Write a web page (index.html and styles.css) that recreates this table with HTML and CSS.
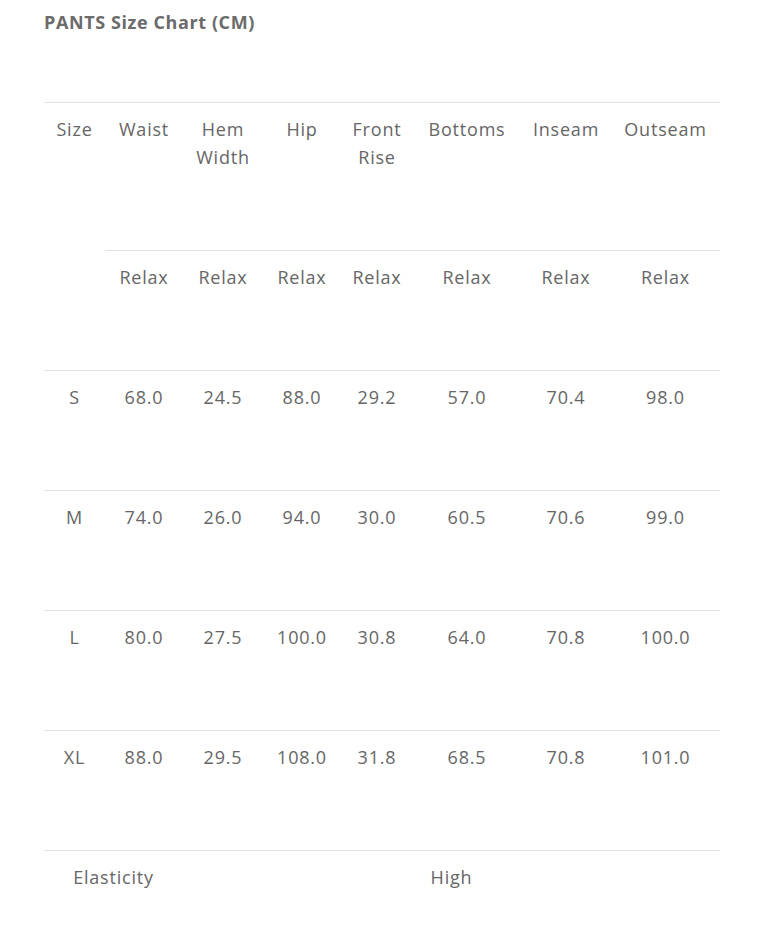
FILE: index.html
```html
<!DOCTYPE html>
<html lang="en">
<head>
    <meta charset="UTF-8">
    <meta name="viewport" content="width=device-width, initial-scale=1.0">
    <title>PANTS Size Chart</title>
    <link rel="stylesheet" href="styles.css">
</head>
<body>
    <div class="chart">
        <h2 class="chart-title">PANTS Size Chart (CM)</h2>
        <table class="size-table">
            <colgroup>
                <col style="width: 61px">
                <col style="width: 78px">
                <col style="width: 80px">
                <col style="width: 78px">
                <col style="width: 72px">
                <col style="width: 108px">
                <col style="width: 90px">
                <col style="width: 109px">
            </colgroup>
            <tr>
                <td rowspan="2">Size</td>
                <td>Waist</td>
                <td>Hem<br>Width</td>
                <td>Hip</td>
                <td>Front<br>Rise</td>
                <td>Bottoms</td>
                <td>Inseam</td>
                <td>Outseam</td>
            </tr>
            <tr>
                <td>Relax</td>
                <td>Relax</td>
                <td>Relax</td>
                <td>Relax</td>
                <td>Relax</td>
                <td>Relax</td>
                <td>Relax</td>
            </tr>
            <tr>
                <td>S</td>
                <td>68.0</td>
                <td>24.5</td>
                <td>88.0</td>
                <td>29.2</td>
                <td>57.0</td>
                <td>70.4</td>
                <td>98.0</td>
            </tr>
            <tr>
                <td>M</td>
                <td>74.0</td>
                <td>26.0</td>
                <td>94.0</td>
                <td>30.0</td>
                <td>60.5</td>
                <td>70.6</td>
                <td>99.0</td>
            </tr>
            <tr>
                <td>L</td>
                <td>80.0</td>
                <td>27.5</td>
                <td>100.0</td>
                <td>30.8</td>
                <td>64.0</td>
                <td>70.8</td>
                <td>100.0</td>
            </tr>
            <tr>
                <td>XL</td>
                <td>88.0</td>
                <td>29.5</td>
                <td>108.0</td>
                <td>31.8</td>
                <td>68.5</td>
                <td>70.8</td>
                <td>101.0</td>
            </tr>
            <tr>
                <td colspan="2">Elasticity</td>
                <td colspan="6">High</td>
            </tr>
        </table>
    </div>
</body>
</html>
```

FILE: styles.css
```css
body {
    margin: 0;
    font-family: "Open Sans", Arial, sans-serif;
    color: #666;
    background: #fff;
}

.chart {
    padding: 10px 0 0 44px;
    width: 676px;
}

.chart-title {
    margin: 0 0 68px;
    font-size: 18px;
    font-weight: 700;
    line-height: 24px;
    letter-spacing: 0.6px;
    color: #6b6b6b;
}

.size-table {
    width: 676px;
    border-collapse: collapse;
    table-layout: fixed;
    font-size: 18px;
    line-height: 28px;
    letter-spacing: 0.8px;
}

.size-table td {
    padding: 12px 0 79px;
    text-align: center;
    vertical-align: top;
    border-top: 1px solid #e3e3e3;
}

.size-table tr:last-child td {
    padding-bottom: 30px;
}
```
